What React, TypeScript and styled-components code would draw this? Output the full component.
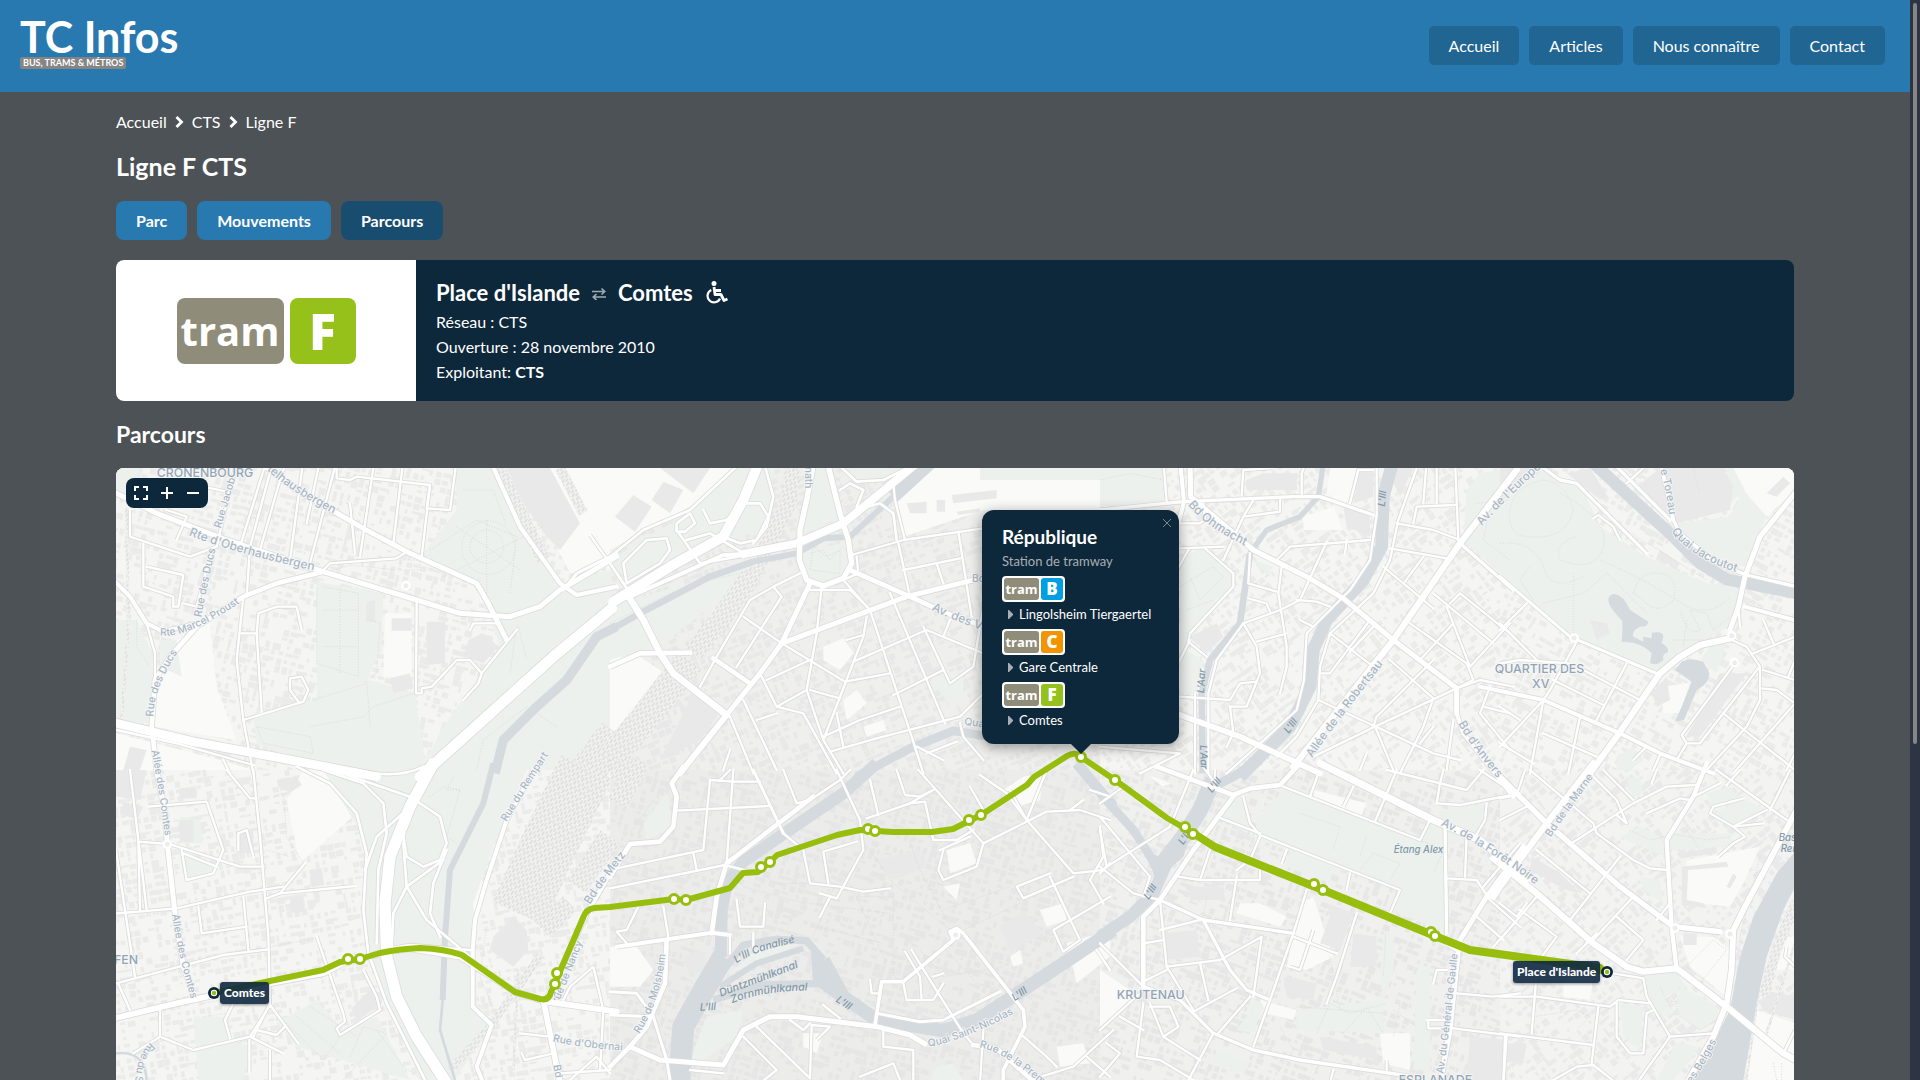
import React from "react";
import styled, { createGlobalStyle } from "styled-components";

const color = {
  brand: "#2979b1",
  brandDark: "#216593",
  active: "#194d70",
  page: "#4d5256",
  navy: "#0e283b",
  line: "#97be0d",
};

const GlobalStyle = createGlobalStyle`
  * { box-sizing: border-box; }
  body {
    margin: 0;
    background: ${color.page};
    color: #fff;
    font: 16px/25px Lato, "Noto Sans", sans-serif;
  }
  h1, h2, h3, p, ol, ul { margin: 0; padding: 0; }
  ol, ul { list-style: none; }
  a { color: inherit; text-decoration: none; }
`;

const Shell = styled.div`
  display: flex;
  height: 100vh;
`;
const Scroller = styled.div`
  flex: 1;
  min-width: 0;
  overflow-y: auto;
  scrollbar-width: none;
`;
const Rail = styled.div`
  width: 10px;
  padding: 3px;
  background: #2e3444;
`;
const Thumb = styled.div`
  width: 4px;
  height: 69%;
  border-radius: 2px;
  background: #868686;
`;

const Header = styled.header`
  display: flex;
  align-items: flex-start;
  justify-content: space-between;
  height: 92px;
  padding: 16px 25px 0 20px;
  background: ${color.brand};
`;
const Brand = styled.a`
  display: flex;
  flex-direction: column;
  align-items: flex-start;
`;
const BrandName = styled.span`
  font-size: 43px;
  font-weight: 700;
  line-height: 41px;
`;
const BrandTag = styled.span`
  padding: 0 3px;
  border-radius: 2px;
  background: #858585;
  font-size: 9px;
  font-weight: 700;
  line-height: 12px;
`;
const Nav = styled.nav`
  display: flex;
  gap: 10px;
  padding-top: 10px;
`;
const NavLink = styled.a`
  padding: 7px 20px;
  border-radius: 5px;
  background: ${color.brandDark};
`;

const Main = styled.main`
  display: flex;
  flex-direction: column;
  max-width: 1710px;
  margin: 0 auto;
  padding: 18px 16px 30px;
`;
const Crumbs = styled.ol`
  display: flex;
  align-items: center;
  line-height: 24px;
`;
const Crumb = styled.li`
  display: flex;
  align-items: center;
  svg { margin: 0 8px; }
`;
const PageTitle = styled.h1`
  margin: 16px 0 18px;
  font-size: 25px;
  line-height: 33px;
`;
const Tabs = styled.nav`
  display: flex;
  gap: 10px;
`;
const Tab = styled.a<{ $active?: boolean }>`
  padding: 7px 20px;
  border-radius: 8px;
  background: ${(p) => (p.$active ? color.active : color.brand)};
  font-weight: 700;
`;
const Card = styled.section`
  display: flex;
  margin: 20px 0;
  border-radius: 8px;
  overflow: hidden;
  background: ${color.navy};
`;
const LogoPane = styled.div`
  display: flex;
  align-items: center;
  justify-content: center;
  width: 300px;
  background: #fff;
`;
const Facts = styled.div`
  padding: 19px 20px 17px;
`;
const Route = styled.h2`
  display: flex;
  align-items: center;
  gap: 12px;
  margin-bottom: 3px;
  font-size: 22px;
  line-height: 27px;
`;
const SectionTitle = styled.h2`
  margin-bottom: 20px;
  font-size: 23px;
  line-height: 27px;
`;

const Badge = styled.span<{ $large?: boolean }>`
  display: inline-flex;
  gap: ${(p) => (p.$large ? 6 : 2)}px;
  padding: ${(p) => (p.$large ? 0 : 2)}px;
  border-radius: 4px;
  background: #fff;
  font-family: "Open Sans", "Noto Sans", sans-serif;
  font-weight: 700;
  text-align: center;
  line-height: ${(p) => (p.$large ? 66 : 22)}px;
`;
const BadgeWord = styled.span<{ $large?: boolean }>`
  width: ${(p) => (p.$large ? 107 : 35)}px;
  border-radius: ${(p) => (p.$large ? 8 : 3)}px;
  background: #8f8c79;
  font-size: ${(p) => (p.$large ? 40 : 13)}px;
`;
const BadgeLetter = styled.span<{ $large?: boolean; $tint: string }>`
  width: ${(p) => (p.$large ? 66 : 22)}px;
  border-radius: ${(p) => (p.$large ? 8 : 3)}px;
  background: ${(p) => p.$tint};
  font-size: ${(p) => (p.$large ? 50 : 17)}px;
  font-weight: 800;
`;

const MapFrame = styled.section`
  position: relative;
  height: 700px;
  border-radius: 8px;
  overflow: hidden;
  background: #f5f5f4;
`;
const Canvas = styled.svg`
  display: block;
  width: 100%;
  height: 100%;
`;
const Controls = styled.div`
  position: absolute;
  top: 10px;
  left: 10px;
  display: flex;
  border-radius: 8px;
  background: ${color.navy};
  padding: 0 2px;
`;
const ControlButton = styled.button`
  display: grid;
  place-items: center;
  width: 26px;
  height: 30px;
  padding: 0;
  border: 0;
  background: none;
  color: #fff;
`;
const Popup = styled.article<{ $x: number; $y: number }>`
  position: absolute;
  left: calc(50% + ${(p) => p.$x}px);
  top: ${(p) => p.$y}px;
  width: 197px;
  padding: 14px 20px 9px;
  border-radius: 12px;
  background: ${color.navy};
  box-shadow: 0 3px 14px rgba(0, 0, 0, 0.4);
  font-size: 13px;
  &::after {
    content: "";
    position: absolute;
    top: 100%;
    left: 50%;
    margin-left: -10px;
    border: 10px solid transparent;
    border-top-color: ${color.navy};
    border-bottom: 0;
  }
`;
const PopupTitle = styled.h3`
  font-size: 19px;
  line-height: 25px;
`;
const PopupKind = styled.p`
  padding-bottom: 2px;
  color: #a9aeb2;
`;
const CloseButton = styled.button`
  position: absolute;
  top: 6px;
  right: 5px;
  display: grid;
  place-items: center;
  width: 14px;
  height: 14px;
  padding: 0;
  border: 0;
  background: none;
  color: #7c868e;
`;
const Stop = styled.li`
  display: flex;
  flex-direction: column;
  align-items: flex-start;
`;
const Destination = styled.span`
  display: flex;
  align-items: center;
  gap: 6px;
  padding: 0 0 2px 6px;
  white-space: nowrap;
`;
const StopLabel = styled.span<{ $x: number; $y: number }>`
  position: absolute;
  left: calc(50% + ${(p) => p.$x}px);
  top: ${(p) => p.$y}px;
  padding: 0 4px;
  border-radius: 3px;
  background: rgba(14, 40, 64, 0.9);
  box-shadow: 0 1px 3px rgba(0, 0, 0, 0.4);
  font-size: 12px;
  font-weight: 900;
  line-height: 22px;
  white-space: nowrap;
`;

function TramBadge({ letter, tint, large }: { letter: string; tint: string; large?: boolean }) {
  return (
    <Badge $large={large}>
      <BadgeWord $large={large}>tram</BadgeWord>
      <BadgeLetter $large={large} $tint={tint}>{letter}</BadgeLetter>
    </Badge>
  );
}

/* ------------------------------------------------------------------ */
/* Base map. Each sheet is drawn in thirds of a pixel from its origin. */

type Stroke = [number, string];
type Label = [string, string, number?, string?];
interface Sheet {
  x: number; y: number; w: number; h: number;
  angle: number;
  land: string;
  block: string;
  green: string[];
  light: string[];
  dark: string[];
  water: Stroke[];
  lakes: string[];
  rail: Stroke[];
  roads: Stroke[];
  paths: string[];
  circles: [number, number][];
  labels: Label[];
}

const streetInk = "#a9b8c6";
const districtInk = "#93a5b5";
const waterInk = "#8199a8";

const minor = (...list: string[]): Stroke[] => list.map((d) => [7, d] as Stroke);

const sheets: Sheet[] = [
  {
    x: 110, y: 460, w: 1500, h: 930, angle: 14, land: "#f5f5f4", block: "#ebebea",
    green: [
      "M18 24H90L60 120 18 95Z",
      "M940 280 1040 150V24H1140L1350 370 1500 330V930H930L1000 800 1170 560 1110 380Z",
      "M620 365 820 400 815 560 770 660 620 730Z",
      "M430 780 780 660 915 700 950 930H640L440 850Z",
      "M18 480H80L135 600 120 790 18 780Z",
      "M150 540 200 540 215 650 150 620Z",
    ],
    light: [
      "M200 540 300 490 320 680 380 840 130 800 135 640Z",
      "M780 750 910 710V880L870 925 800 920Z",
      "M690 780 770 785 775 890 700 895Z",
      "M510 760 590 740 605 800 530 820Z",
      "M1220 24H1500V320L1380 340Z",
      "M825 460H905V650H820Z",
      "M18 820 330 900 430 930H18Z",
    ],
    dark: [
      "M1190 24H1320L1410 190 1350 270 1310 230 1240 130Z",
      "M950 485H1005V610L950 615Z", "M845 475H905V512H845Z", "M840 655 900 640 910 685 850 700Z",
      "M1075 540 1120 520 1165 560 1120 610 1060 590Z", "M60 860 110 870 90 930H40Z", "M770 425 795 420V485H768Z",
    ],
    water: [[28, "M1520 500 1460 530 1370 660 1280 740 1180 840 1155 940"]],
    lakes: [],
    rail: [[40, "M1165 24 1300 300"], [30, "M1350 24 1420 160"], [9, "M50 150 55 500 35 780"], [110, "M1420 950 1520 820"]],
    roads: [
      [26, "M0 785 250 845 500 892 800 950"], [32, "M930 950 1130 770 1330 590 1505 445"],
      [15, "M0 90 140 160 350 240 640 335 920 420 1050 460 1200 470 1290 440 1350 390 1520 290"],
      [15, "M440 0 560 90 760 205 900 280 1100 370 1135 430 1190 540"],
      [13, "M1140 0 1230 200 1350 370 1400 405 1520 380"],
      [14, "M640 335 500 370 400 410 260 500 180 590 135 660 125 800 140 930"],
      [12, "M0 350 60 410 110 490 160 515 260 490"], [9, "M1360 390 1400 340 1520 280"],
      ...minor(
        "M110 490 135 580 135 660", "M400 410 380 600 400 780 430 940", "M400 780 580 725 595 690 575 650 540 655 540 690 565 725",
        "M395 520H440L455 755", "M440 522 445 460 500 440 560 440 575 510", "M60 150V230L240 290 320 260 345 150 380 0",
        "M100 250V380L190 410V440H205L220 345 110 320", "M470 0 390 260", "M580 0 540 300", "M410 410 420 260 490 0",
        "M450 270 510 60 530 0", "M600 310 680 0 680 55 720 60 740 50 960 75 950 145 1020 150 1040 0", "M960 75 935 290",
        "M790 24 750 290", "M880 0 850 250", "M640 330 660 310 860 295 890 275",
        "M920 420 918 700H935V685L965 680 1040 600H1080L1115 640 1105 670 1060 720", "M1220 510 1115 640",
        "M20 810 200 850 430 915", "M220 430 260 440 300 290", "M630 0 590 190", "M1440 225 1500 310", "M170 150 230 170 200 240",
        "M280 80 350 95", "M340 900 360 940", "M720 130 735 280", "M1080 510 1090 490 1160 490",
      ),
    ],
    paths: [
      "M960 270 1100 180 1220 230 1200 400", "M1130 180V460", "M1040 200 1230 330", "M1215 260A80 80 0 1 1 1214 250",
      "M1180 260A50 50 0 1 1 1179 250", "M1000 350 1300 200", "M1060 90H1150L1190 200", "M640 380 745 400V650L620 610V380",
      "M690 380V640M640 450H745M640 560H745", "M780 480 810 490 800 640 770 660 780 800", "M600 800 760 770 790 740 910 700",
      "M610 720 770 670", "M1220 500 1200 640M1225 500 1250 600", "M640 340 720 315 860 330", "M870 300H930V330H870Z",
      "M1100 930 1120 840 1250 740 1340 800", "M80 480V560L120 620", "M440 800 600 830 610 880 460 850Z",
    ],
    circles: [[888, 377]],
    labels: [
      ["CRONENBOURG", "M140 52H600", 37, districtInk],
      ["telhausbergen", "M470 30Q560 110 720 185", 35],
      ["Rte d'Oberhausbergen", "M236 226Q400 290 700 350", 36],
      ["Rue Jacob", "M332 206 392 0", 31],
      ["Rue des Ducs", "M274 472Q290 380 325 230", 32],
      ["Rte Marcel Proust", "M150 526Q240 540 460 380", 31],
      ["Rue des Ducs", "M130 770Q130 680 220 550", 32],
      ["Allée des Comtes", "M124 872Q150 1000 172 1190", 31],
    ],
  },
  {
    x: 110, y: 770, w: 1500, h: 930, angle: -10, land: "#f5f5f4", block: "#ebebea",
    green: [
      "M640 0H1250L1160 200 1090 400 1100 700 1150 760 1020 950H940L830 700 770 500 760 200Z",
      "M500 760 620 690 700 780 800 740 900 930 560 830Z", "M250 740H360L350 800 420 830 400 930H265Z",
      "M210 140 270 150 280 220 215 220Z", "M225 250 320 290 300 320 230 330Z",
    ],
    light: ["M530 90 580 0H650L740 130 570 280Z", "M770 400 800 400V530H780Z", "M860 400 900 410 920 510 850 530Z", "M1085 320H1115V420H1090Z"],
    dark: [
      "M18 0H110L90 90 18 80Z", "M40 95 100 110 80 150 30 130Z", "M205 150H250V215H210Z", "M600 300 635 295 642 345 602 350Z",
      "M540 382 580 380 585 425 543 428Z", "M500 30 560 20 575 45 540 68 505 50Z", "M1150 500 1210 440 1250 480 1255 540 1210 590 1140 540Z",
      "M725 715 790 650 815 700 740 755Z", "M390 180H430V250H380Z", "M208 55H260V85H208Z",
    ],
    water: [[18, "M1150 -20 1120 100 1020 300 1005 500 998 690"], [8, "M998 690 990 780 1020 880 1035 930"], [8, "M18 850Q110 840 110 940"]],
    lakes: [],
    rail: [[170, "M1225 430 1310 240 1430 -10"], [70, "M1400 350 1500 200"], [60, "M1300 480 1380 400"], [24, "M1290 560 1140 770 1020 900"], [8, "M1225 600 1210 900"]],
    roads: [
      [34, "M970 -20 900 110 840 260 825 400 830 560 860 680 920 800 1010 940"],
      [17, "M0 748 200 700 290 680 480 640 640 610 700 580 830 545 900 535 1050 560 1215 665 1310 695 1520 725"],
      [15, "M140 0 165 130 172 220 195 430 220 590 250 670"],
      [12, "M1270 0 1190 150 1130 330 1095 450 1088 540V710L1145 765 1100 890 1120 940"],
      [17, "M1300 690 1350 940"], [14, "M1310 685 1430 430 1500 310 1520 290"],
      ...[
        "M560 -10 660 40 740 130 770 250 760 420 775 550 830 700 950 940", "M640 0 760 40 820 100 830 190 805 300 800 520",
        "M640 -10 900 80 990 140 1010 220 990 270 940 290 890 260 880 200 900 110", "M900 110 800 200 765 300",
        "M1000 270 890 350 850 430 845 530", "M880 220 890 350 950 450 1080 560", "M1010 240 970 340 960 430 990 500",
        "M740 0Q860 30 940 -10", "M1080 540 900 525 840 535",
      ].map((d) => [8, d] as Stroke),
      ...minor(
        "M430 0 450 200 475 500 480 700 430 800", "M350 0 420 85H440", "M0 432 200 415 420 365 520 350",
        "M115 110 290 95 340 240 310 310 230 330 215 240", "M172 220 390 290H460", "M90 420 85 215 172 222",
        "M18 240 75 620", "M18 640 340 555 475 538", "M265 410 275 490 410 470", "M400 380 415 540", "M470 385 510 370 735 348",
        "M510 370 585 280", "M620 500 700 730 705 755 680 775 690 795 810 720 800 680 760 600", "M150 710V800L70 850",
        "M150 800 250 840 420 800 480 705 565 820", "M440 780 500 795 525 770", "M418 810V905", "M480 840V940", "M370 700 345 750 360 805",
        "M1230 790 1320 800", "M1235 850 1245 870 1330 850", "M1360 690 1380 650 1450 590 1480 720 1470 900", "M1350 910 1500 900",
        "M220 250 320 290", "M385 240V190L410 180 430 260", "M24 640 60 720", "M1380 930 1460 860 1500 910", "M110 420 60 0", "M420 800 520 850",
      ),
    ],
    paths: [
      "M490 80 520 70 530 200 580 280M470 240 540 260", "M480 530 620 505", "M960 80 1000 50 1050 60 1010 200 1040 220",
      "M530 760 640 870M560 740 690 850M600 710 740 800M640 870 720 760", "M700 930 830 790 760 770 720 860", "M1030 20 1010 60 1050 60",
      "M280 740 350 730M330 690 280 700", "M20 330 100 400 110 420", "M1130 470 1110 620 1160 740", "M800 780 880 890 940 930",
    ],
    circles: [[172, 223]],
    labels: [
      ["Allée des Comtes", "M186 434Q205 570 268 770", 31],
      ["Rue du Rempart", "M1190 156Q1270 20 1410 -190", 31],
      ["Bd de Metz", "M1440 404Q1530 260 1680 110", 34],
      ["Rue de Nancy", "M1330 690 1350 690 1470 380", 31],
      ["FEN", "M12 582H200", 37, districtInk],
      ["Rue d'Obernai", "M1328 814Q1420 836 1580 844", 31],
      ["Bd de Lyon", "M1330 886 1370 1120", 31],
      ["Rue du S", "M122 818Q70 860 76 980", 31],
    ],
  },
  {
    x: 610, y: 460, w: 1500, h: 930, angle: -22, land: "#efefee", block: "#e8e8e8",
    green: [
      "M610 24H660L690 170 570 230 600 100Z", "M580 270 700 250 720 310 690 360 600 360 575 320Z",
      "M370 24H490L480 200 340 250 50 360 0 300 200 180Z", "M690 24H880L800 70 740 60Z", "M0 440 400 320 420 350 160 550 0 600Z",
      "M1110 60H1500V24H1110Z", "M520 740 570 730 580 660 600 700Z", "M960 650 1060 640 1060 720 1020 740Z",
    ],
    light: ["M0 24H370L240 140 0 270Z", "M880 24H1500V150H1120L880 230 860 150Z", "M100 500 300 380 310 400 190 500 120 520Z", "M640 560 700 535 730 580 690 630 640 600Z", "M760 800 820 780 830 810 770 830Z", "M0 590 90 590 180 650 100 760 0 820Z", "M700 720 740 690 770 730 710 780Z"],
    dark: ["M70 105 125 140 75 215 15 170Z", "M160 65 220 90 180 160 125 120Z", "M150 24H300L250 100Z", "M980 120H1005V155H980Z", "M1025 105 1160 90V115L1030 130Z", "M890 130 950 125V160H900Z", "M1040 155 1110 145V155L1045 165Z", "M250 680 340 740 270 840 150 900 230 740Z"],
    water: [[40, "M970 0 850 110"], [18, "M850 110 720 230 640 235 560 280 430 305"], [20, "M430 305 300 350 100 455 0 510"], [26, "M740 950 900 865 1030 812 1200 840 1500 800"]],
    lakes: [],
    rail: [[48, "M550 24 535 130 470 260 420 360"], [64, "M420 350 330 480 250 580"], [90, "M240 600 100 780 0 900"]],
    roads: [
      [30, "M10 425 180 320 340 230 400 120 450 0"], [24, "M400 282 560 250 700 190 920 10"], [12, "M60 410 340 285 410 282"],
      [16, "M612 0 590 120 570 210 568 300 590 360 640 378 700 355 725 310 715 240 690 160 650 0"],
      [20, "M50 400 100 480 150 580 190 640 350 765"], [18, "M350 765 210 940"], [15, "M350 765 450 640 515 550 600 370"],
      [15, "M515 550 890 410 1130 350"], [14, "M720 330 900 410 1010 460 1300 560"], [14, "M0 620 90 580 240 578"], [14, "M310 595 420 670"],
      ...[
        "M0 290 100 210 240 150 390 10", "M240 160 200 190 200 215 225 215 255 190Z", "M200 210 270 310 410 285",
        "M280 150 300 190 350 180 400 130 450 130 475 170 440 240 390 250 340 230", "M460 0 490 110 470 200 430 250",
        "M170 235 180 270 150 310 50 370 40 310 110 240Z", "M690 90 720 70 760 90 740 140", "M670 0 740 65 820 60 920 10",
        "M740 150 810 130 850 160 860 240", "M0 310 60 400", "M230 240 300 220 410 285",
      ].map((d) => [8, d] as Stroke),
      ...minor(
        "M850 70 855 120 885 240", "M725 285 880 240 1120 205", "M865 250 900 410", "M1045 215 1085 470", "M880 330 1050 295",
        "M980 310 1000 370", "M570 340 490 380 420 420 320 590 270 680", "M490 380 515 410 380 620", "M400 470 515 550 705 665",
        "M635 380 620 520 590 690 640 840 700 940", "M600 390 720 390 780 450", "M700 360 780 450 905 830 940 940",
        "M840 400 1005 790", "M770 470 760 530 640 840", "M450 640 500 740 590 690", "M470 660 600 600",
        "M400 720 500 930", "M500 740 580 760 680 940", "M600 690 690 715", "M360 770 430 940", "M660 875 800 835 1050 770 1120 700",
        "M640 830 750 780 870 740", "M705 665 840 640", "M850 705 1000 630", "M730 605 950 510 1120 580", "M680 760 700 860",
        "M1120 440 1090 620 1020 670 940 500", "M1050 790 1060 830 1120 900", "M360 870 340 930", "M1000 530 1020 480",
        "M710 540 760 525", "M440 780 500 760", "M740 290 745 340 700 360", "M920 860 1000 900M950 880 1040 845",
      ),
    ],
    paths: ["M600 280 640 270 660 300 700 260", "M600 330 690 340 690 270 650 290 610 260Z", "M660 24 720 110 700 140", "M0 490 180 400 300 360 430 330"],
    circles: [],
    labels: [
      ["nath", "M586 20V200", 31],
      ["Bd", "M1086 366H1200", 31],
      ["Av. des Vosges", "M964 450Q1080 505 1290 566", 36],
      ["Quai", "M1062 794 1200 814", 31],
    ],
  },
  {
    x: 610, y: 770, w: 1500, h: 930, angle: 16, land: "#ececeb", block: "#e6e6e6",
    green: ["M360 610 440 540 570 520 500 560Z", "M240 870 290 740 400 720 380 800 280 870Z", "M100 160 170 70 190 170 110 210Z", "M980 890 1030 880 1060 930H960Z"],
    light: ["M0 530 80 530 130 600 90 650 0 650Z", "M1010 240 1080 220 1100 280 1020 310Z", "M1200 560 1230 540 1240 580 1210 590Z", "M1340 830 1420 820 1440 880 1350 890Z", "M1290 420 1360 400 1370 450 1310 470Z", "M1180 60 1240 20 1300 10 1290 90 1220 110Z", "M1370 520 1500 480V560L1400 640Z", "M580 790H640L620 850 580 830Z", "M1000 350 1050 340 1040 390Z"],
    dark: ["M1170 470 1240 420 1300 490 1200 550Z", "M800 270 930 240 950 290 850 330Z", "M220 560 270 540 300 590 240 620Z"],
    water: [
      [36, "M800 -20 700 70 560 165 400 275 350 340 335 420 332 560"], [66, "M340 560 270 680 220 770 207 940"],
      [22, "M340 600 400 525 500 508 590 512 640 570"], [40, "M640 570 700 680 800 750 1000 782 1100 750 1300 620 1510 480"],
      [18, "M330 650 440 580 580 535"], [22, "M310 690 450 645 630 640 710 690"], [32, "M1400 -20 1510 110"],
    ],
    lakes: ["M600 520 700 660 720 720 610 640Z"],
    rail: [[60, "M0 0 80 0 20 100"]],
    roads: [
      [14, "M0 320 60 222 150 215 190 170 200 80 185 40 220 -10"], [14, "M610 80 350 280 320 380 305 490"], [12, "M20 530 305 488 360 495"],
      [14, "M170 510 165 640 110 770 60 830 0 890"], [15, "M60 830 150 870 340 885 400 780 480 740 560 740 800 770 900 795 945 822"],
      [11, "M795 765 815 635H880L1030 510 1020 485 1040 475 1060 490 1240 720 1245 770 1180 900V940"], [14, "M1090 825 1160 835 1260 925"],
      ...[
        "M0 665 80 670 130 740 170 870 180 930", "M0 735 125 740", "M800 730 930 755 1000 750 1170 665", "M520 190 430 0",
      ].map((d) => [9, d] as Stroke),
      ...minor(
        "M370 0 350 280", "M520 190 580 240 600 340 690 350 760 365 840 355", "M300 30 370 35 450 35", "M200 122 475 108", "M300 30 280 240 20 295",
        "M0 355 345 285 440 310", "M680 0 750 150 760 240 680 385 630 370", "M630 440 660 380", "M740 215 640 245 655 340", "M520 0 560 100 600 90 690 30 720 0",
        "M780 30 805 135", "M770 145 900 100 970 60 930 80 885 75 860 0", "M900 100 945 95 970 210H1040L1090 180",
        "M925 0 970 50 1120 220 1100 290 1000 330 985 300 1000 240", "M990 240 1080 200", "M1120 220 1310 125 1410 120 1500 150",
        "M1200 60 1250 150 1390 310 1480 300 1500 280", "M1390 320 1240 385 1220 350 1320 310", "M1320 320 1410 510 1360 545 1330 480 1500 380",
        "M905 540 935 590 1060 790 1090 825", "M885 545 930 620 935 690", "M880 640 890 690H970L1000 640", "M640 705 690 745", "M440 770 600 925 605 765 660 770 620 810",
        "M820 780V830L910 840V940", "M1120 780 1110 940", "M1235 795 1310 860 1340 890", "M1260 930 1390 890 1510 780", "M380 390 390 470 460 470 465 400",
        "M250 250 260 300", "M160 410 175 500", "M85 410 50 480 20 485 50 520", "M360 0 330 30", "M1470 170 1480 260 1440 330 1480 400",
        "M400 800 500 900 450 940", "M1440 60 1500 80M1380 120 1420 90", "M1080 50 1120 120", "M1110 15 1190 70 1250 150 1310 0", "M540 750 580 780 600 760", "M240 900 340 910",
        "M1460 540 1500 600", "M1430 860 1500 920", "M750 920 850 880 870 930", "M360 500V550M430 490V540", "M780 630 785 670 805 670", "M970 620 1000 610",
      ),
    ],
    paths: [
      "M750 200 850 340 1020 480", "M890 190 930 300 1020 470", "M470 320 500 340 600 340", "M690 310 600 520", "M720 340 830 580", "M600 400 840 430",
      "M620 470 820 520", "M740 380 850 380 850 620", "M1000 420 1200 350", "M1060 480 1230 400", "M180 250 150 330V420", "M130 90 60 190", "M400 350 580 400",
      "M930 540 1000 620 1180 590", "M220 620 350 710", "M1000 530 1100 640 1170 660",
    ],
    circles: [[1037, 495]],
    labels: [
      ["Rue de Molsheim", "M88 792Q160 680 170 510", 31],
      ["L'Ill Canalisé", "M380 580Q450 530 640 504", 31, waterInk],
      ["Düntzmühlkanal", "M332 680Q440 640 680 548", 32, waterInk],
      ["Zornmühlkanal", "M366 700Q480 652 680 664", 32, waterInk],
      ["L'Ill", "M270 722 400 716", 31, waterInk],
      ["L'Ill", "M676 694 760 750", 31, waterInk],
      ["L'Ill", "M1214 694 1290 640", 31, waterInk],
      ["Quai Saint-Nicolas", "M956 830Q1080 810 1290 686", 31],
      ["Rue de la Première", "M1108 832Q1200 850 1340 986", 31],
    ],
  },
  {
    x: 1100, y: 460, w: 1230, h: 930, angle: -35, land: "#f5f5f4", block: "#ebebea",
    green: ["M240 290 310 265 400 340 395 380 270 540 240 620Z", "M1090 240 1100 90 1140 40 1230 24V370Z", "M240 560 310 600 290 700 240 700Z", "M0 24H190V125L0 140Z", "M460 300 520 320 500 345Z"],
    light: ["M0 90 100 80V130L0 125Z", "M610 170 700 140 730 210 610 210Z", "M690 24H770L740 140 680 100Z"],
    dark: ["M780 24H820V110L760 130Z", "M730 140 810 165V230L740 200Z", "M880 24H940L900 110 880 70Z", "M270 530 350 490 370 530 320 580Z", "M490 40 590 40V90L440 90V60Z"],
    water: [[16, "M672 0 655 110 600 170 500 210 450 280"], [20, "M450 280 430 420 420 490 330 600 305 700 308 940"], [38, "M880 0 850 110 845 260 790 360 680 480 640 570 630 680 570 800 420 950"]],
    lakes: [],
    rail: [],
    roads: [
      [10, "M0 150 250 125 580 110 660 110 820 165"], [12, "M240 0 252 125 235 190"], [15, "M270 0 272 110 460 270 620 350 730 415 880 540 1070 685V760"],
      [19, "M1250 30 1080 250 880 540 580 920"], [17, "M0 680 240 765 420 830 660 940"], [10, "M1080 250 1240 390"], [12, "M1070 760 1090 820 1240 1010"],
      ...minor(
        "M425 105 430 30 520 24", "M605 110V40L620 0", "M950 24 895 180 870 300 820 400 690 520 660 620 655 720 590 830 530 890",
        "M830 0V165L810 300 750 390 620 520 612 660 590 750 470 860 380 940", "M890 190 1000 210 1080 240", "M940 190 950 140 1065 135", "M1065 0 1075 240",
        "M980 0 970 130M1010 24V130", "M870 265 1040 295", "M850 320 1000 445", "M915 365 970 290", "M1000 400 1180 550", "M930 490 1100 610 1120 660 1070 685",
        "M1040 440 1110 620 1230 490", "M1050 430 1080 400 1230 520", "M690 520 820 620", "M750 575 820 500", "M810 480 690 640 665 640", "M960 600 1060 490",
        "M870 600 1000 715", "M1070 685 825 800 640 890", "M1000 715 970 800 900 940", "M820 800 830 770 1000 600", "M1070 685 1140 660 1240 680",
        "M825 800 880 930", "M655 720 1000 880 1080 900", "M1170 680 1140 760 1230 870", "M530 300 570 260 810 240", "M450 280 445 370 530 395M445 415 500 430 510 455",
        "M545 320 535 400 560 560 560 620 540 700", "M680 245 600 420 540 450 430 490", "M460 120 430 170 540 155V120", "M430 170 370 300", "M590 420 650 425 690 440",
        "M600 480 640 500", "M430 490 470 560 480 640 440 740H390", "M430 490 350 600 325 700V940", "M470 545 560 520", "M240 710 390 720 420 670 470 665", "M390 740 400 820 380 860",
        "M240 265 370 260", "M315 265 400 340V380L270 520 265 545 320 590", "M190 0 200 125", "M750 130 775 30 820 30", "M0 860 240 880 120 940", "M285 700V940", "M265 270 180 420",
        "M240 600 270 540", "M310 130 315 180 300 190H240", "M740 240 735 280", "M1000 800 960 850", "M1060 780 1040 930", "M1150 740 1230 760", "M800 880 780 930",
      ),
    ],
    paths: ["M240 380 340 320 370 350 300 420 270 350", "M0 60 90 40 190 60", "M870 60 860 250", "M1130 130 1230 120M1180 90 1150 240 1230 300", "M260 450 340 420"],
    circles: [],
    labels: [
      ["Bd Ohmacht", "M264 134Q320 210 500 288", 36],
      ["L'Ill", "M854 140 864 40", 30, waterInk],
      ["L'Aar", "M312 700 320 560", 30, waterInk],
      ["L'Aar", "M300 856 306 1000", 30, waterInk],
      ["L'Ill", "M566 822 640 720", 30, waterInk],
      ["Allée de la Robertsau", "M636 894Q720 770 940 500", 35],
      ["Av. de l'Europe", "M1146 198Q1220 110 1420 -60", 35],
      ["Bd d'Anvers", "M1074 792Q1130 890 1300 1080", 35],
      ["QUARTIER DES", "M1184 640H1700", 37, districtInk],
      ["XV", "M1296 684H1500", 37, districtInk],
    ],
  },
  {
    x: 1500, y: 460, w: 885, h: 930, angle: 28, land: "#f5f5f4", block: "#ebebea",
    green: ["M0 130 130 30 250 90 300 200 440 290 620 370 740 380 690 500 530 580 480 640 230 540 0 340Z", "M520 190 690 170 730 90 800 170 740 320 640 300 540 210Z", "M680 24H700L735 90 690 130Z", "M630 560 680 550 650 640 600 600Z", "M350 890 400 860 430 900 390 930H350Z"],
    light: ["M700 24H885V90L800 170 730 90Z", "M330 230 430 280 400 330 330 290Z", "M130 430 160 395 190 430 180 470Z", "M455 425 490 400 512 410 500 440Z", "M480 680 570 670 540 760 490 760Z"],
    dark: ["M400 90 480 24H670L700 80 690 150 530 190Z", "M200 40 270 24 330 120 290 110Z", "M270 480 320 490 330 520 290 540Z", "M455 700 500 650 510 720 470 740Z", "M660 640 740 640 600 830 560 830Z", "M480 270 540 310 530 330 470 290Z", "M800 100 850 50 870 70 830 110Z", "M0 24H100L0 130Z"],
    water: [[36, "M270 0 400 120 520 230 600 310 680 358 900 402"]],
    lakes: [
      "M325 420Q325 402 345 402 370 405 390 450L445 485Q445 500 420 500 395 510 400 530L430 545 430 530 455 535 455 518Q490 512 490 530L485 550Q505 560 505 575 485 580 490 600 470 620 450 608L455 580Q440 560 400 548L365 545Q370 490 365 480 325 440 325 420Z",
      "M525 630 545 605Q570 590 610 605L628 640Q630 670 590 690L552 780 525 785 545 740 575 665Z",
    ],
    rail: [],
    roads: [
      [10, "M130 24 180 60 230 70 440 280"], [10, "M330 0 510 180"], [15, "M900 80 780 230 735 350 715 440 690 510"], [10, "M520 180 540 220 650 310 740 345 900 382"],
      [12, "M735 440 900 485"], [19, "M690 535 600 555 540 590 480 640 350 830 270 940"], [9, "M0 350 210 530 480 645"], [11, "M480 0 520 180"], [12, "M-60 680 130 720 360 820 480 880 640 940"],
      ...minor(
        "M380 70 430 24", "M695 540 740 560 780 620V720L740 800 610 940", "M885 530 760 580", "M790 480 820 550", "M790 630 885 660", "M785 685 830 690 885 730",
        "M775 625 600 850H560L545 825 705 610", "M560 850 530 900", "M670 760 885 930", "M885 730 700 940", "M230 545 150 690 130 720 90 940", "M380 610 290 780",
        "M250 630 420 720", "M0 490 110 600", "M0 510 80 430", "M160 660 310 735", "M130 820 290 890", "M240 770 205 940", "M0 860 130 720", "M0 850 100 910",
        "M0 610 60 600 210 610", "M0 740 60 780", "M400 900 440 860M480 885 460 930", "M885 600 865 650M885 880 860 930", "M280 175 295 165 340 200 360 240", "M715 440 720 500",
      ),
    ],
    paths: [
      "M130 60Q40 80 30 150 20 230 90 230 200 240 220 150 200 70 130 60", "M0 250Q100 240 130 320 150 400 250 350", "M180 100Q330 180 310 260 290 340 180 300 160 250 230 230",
      "M220 340V520", "M90 320 60 360 100 420", "M300 300Q440 360 560 440 640 470 690 410", "M400 400Q420 330 480 340 540 350 520 420 470 470 430 420Z", "M540 450Q560 530 600 510L570 450 620 460 640 510 690 470",
      "M130 430 250 400 320 340 440 460", "M560 480 550 560", "M520 540 640 540", "M580 24 600 100", "M330 180 620 360",
    ],
    circles: [[695, 527], [704, 608], [222, 534]],
    labels: [
      ["e Toreau", "M480 30Q500 90 516 230", 33],
      ["Quai Jacoutot", "M514 214Q590 320 820 364", 35],
    ],
  },
  {
    x: 1100, y: 770, w: 1260, h: 930, angle: 20, land: "#f0f0ef", block: "#e7e7e7",
    green: ["M350 140 390 90 430 90 460 170 440 190Z", "M560 60 640 90 960 200 1030 120 1160 100 1120 210 1040 220V490L880 420 900 360 460 200 480 130Z", "M570 230 700 290 690 340 560 290Z", "M590 720 850 690V790L590 780Z", "M850 490 880 500V600L850 700 840 620Z", "M410 780 470 700 490 700 460 790Z", "M950 600H990V900H940Z", "M350 840 450 880 430 910 340 880Z"],
    light: ["M420 400 480 400 560 440 540 470 410 430Z", "M0 600 120 680 0 770Z", "M640 60 800 100 780 150 650 130Z", "M600 400 640 380 700 560 620 600 560 590Z", "M240 510 280 500 290 550 240 560Z", "M480 690 590 720 580 750 500 730Z", "M840 790H930V900L850 880Z", "M160 20 210 40 190 50 150 20Z"],
    dark: ["M680 400 760 430 720 540 660 520 690 440Z", "M270 350 370 350 375 390 270 390Z", "M760 490 830 500 830 590 750 590Z", "M550 620 650 640 640 690 560 680Z", "M1110 800 1220 810V930H1100Z", "M660 800 830 830V870L670 840Z", "M190 490 290 480 300 560 200 570Z"],
    water: [[28, "M480 -30 400 20 340 50"], [48, "M340 30 300 120 250 200 180 290"], [26, "M0 70 100 180 170 290"], [36, "M200 280 160 370 90 440 0 500"]],
    lakes: ["M130 240 180 260 280 170 250 260 170 330Z"],
    rail: [],
    roads: [
      [14, "M170 -10 400 75 450 55 540 45 600 -20"], [21, "M660 -20 1000 150 1140 210 1260 310 1280 325"], [14, "M400 80 280 240 180 390 130 440V650"], [15, "M1270 230 1160 380 1080 510"],
      [15, "M1040 520 1075 540 1050 780 1020 940"], [10, "M1035 160 1040 490"], [10, "M180 390 310 450 580 490"], [10, "M310 450 390 600 440 660 510 690"], [10, "M130 650 240 690 340 790 460 840 600 870 940 920"],
      ...minor(
        "M430 80 450 160 480 195 900 360 870 430", "M550 50 960 210 990 150", "M655 10 630 80", "M760 50 730 110", "M890 0 825 155", "M480 190 350 140", "M0 100 70 50",
        "M20 290 210 170 280 0", "M0 140 150 320 130 380", "M0 290 100 370 180 390", "M620 360 580 490 510 690 460 830", "M235 320 300 330H480V300", "M330 240 300 330",
        "M410 320 390 450", "M480 200 450 270 410 300", "M560 240 545 280", "M750 310 740 360", "M180 390 200 590 280 720", "M130 520 190 510", "M180 480 300 450",
        "M200 590 360 570 485 500 460 680", "M300 580 325 690", "M280 725 410 655", "M130 635 200 600", "M0 780 130 660", "M150 700 190 800 300 870", "M130 700 110 860 180 870 280 930",
        "M350 795 450 680", "M340 790 260 940", "M60 740 130 780", "M0 520 130 650", "M770 430 710 620 680 700", "M580 500 710 550", "M1070 670 1180 680 1260 670", "M1060 775 1260 800",
        "M1040 325 1130 330 1170 390 1260 470", "M1100 200 1095 320", "M1130 440 1210 510", "M1180 530 1260 440", "M1160 100 1155 150 1120 210", "M1010 100 1080 105 1260 70",
        "M1030 0 1020 40 1010 100", "M860 0 1100 60 1150 0", "M1150 350 1260 220", "M1220 800 1210 940", "M980 750H1040M985 750V775L1060 775", "M150 710 210 710 235 770 190 800", "M0 180 20 290 0 310",
        "M640 480 600 600 570 590", "M700 900 690 940M860 870V900", "M20 820 60 850 0 920", "M1000 640 1010 600 1040 600", "M1140 0 1260 80", "M345 0V40L310 -10",
      ),
    ],
    paths: ["M590 710 850 730M650 790 690 700 750 730 860 700", "M730 790 800 710 850 790", "M780 300 820 250 900 280 870 330", "M860 440 850 620", "M800 200 780 260", "M960 210 1030 240 1000 310", "M540 770 580 840 540 900", "M600 130 720 170 700 240", "M690 560 720 720M320 380 310 440", "M880 720 950 770M900 700 880 800"],
    circles: [],
    labels: [
      ["L'Ill", "M250 226 300 150", 30, waterInk],
      ["L'Ill", "M336 70 400 -10", 30, waterInk],
      ["L'Ill", "M146 390 210 290", 30, waterInk],
      ["Étang Alex", "M881 250H1200", 29, waterInk],
      ["Av. de la Forêt Noire", "M1022 166Q1220 260 1500 500", 35],
      ["KRUTENAU", "M50 686H400", 37, districtInk],
      ["ESPLANADE", "M896 942H1400", 37, districtInk],
      ["Av. du Général de Gaulle", "M1030 912Q1052 760 1082 460", 31],
    ],
  },
  {
    x: 1500, y: 770, w: 885, h: 930, angle: -38, land: "#f3f3f2", block: "#eaeaea",
    green: ["M360 200 420 170 500 210 495 260Z", "M510 190H700L690 230 510 240Z", "M640 130 730 85 800 120 700 165Z", "M430 620 520 600 560 650 490 680 520 720 490 740 450 700Z", "M360 700 430 710 420 840 370 800Z", "M530 820 600 830 520 930H470Z", "M540 650 640 700 660 740 600 780 530 730Z", "M420 320 480 330 490 400 430 360Z", "M620 70 690 50 720 90 640 120Z", "M380 30 420 20 430 70 400 80Z"],
    light: ["M560 270 780 230 730 340 690 410 600 400 560 400Z", "M770 720 885 760V930H740Z", "M820 600 885 600V500H860Z", "M540 500 640 500 690 540 680 680 570 590Z", "M190 610 280 620 270 690 190 680Z"],
    dark: ["M545 290 680 275 685 290 565 300 560 390 610 400V412L545 405Z", "M680 350 700 310 710 320 690 355Z", "M790 660 885 680V750L785 720Z", "M550 490H590V525H550Z", "M530 250 650 230V250L540 265Z", "M0 820 80 820 70 880 0 870Z", "M95 260 180 310 240 370 200 360 90 300Z"],
    water: [],
    lakes: ["M885 245 830 310 760 440 720 560 690 720 640 820 560 930H730L770 700 800 560 850 420 885 350Z"],
    rail: [[30, "M885 400 830 540 790 680"], [8, "M885 520 800 790"], [6, "M780 640 740 930"]],
    roads: [
      [16, "M-10 10 140 160 360 350 520 470 660 485"], [19, "M-20 265 110 370 280 520 380 590 430 605 530 595 680 710 850 850 890 872"], [17, "M895 110 740 400 700 480 695 600 680 700 640 800 560 940"],
      [13, "M620 -20 580 80 500 210 505 300 515 470 530 600"], [19, "M280 -20 140 160 0 350 -20 380"],
      ...minor(
        "M585 45 500 50 400 100 215 220", "M470 0 455 40", "M310 0 400 90", "M270 10 350 90 380 160 350 135", "M75 0 50 75 0 85", "M90 0 280 160 290 190 400 270 450 295 500 300",
        "M110 240 270 370", "M210 450 360 260", "M270 520 400 380", "M350 440 430 510 380 570", "M60 420 170 500 110 580", "M0 510 110 380", "M470 450 510 400", "M650 0 860 150",
        "M590 75 660 40M680 45 720 0", "M800 120 700 170 630 130 640 110 730 85", "M870 0 810 120", "M700 170 790 160M700 170 735 200 700 220 655 260", "M440 130 540 85 570 90", "M0 680 110 680 330 710 355 690 450 700",
        "M110 610 95 790", "M295 710 275 880", "M0 790 280 825", "M350 700V800L390 850H430L440 730 460 720", "M340 610 430 625 440 680 510 800 640 790", "M510 800 410 940",
        "M160 930 230 890 280 885 350 940", "M15 795 10 940", "M230 550 290 490", "M0 400 50 440 80 400", "M0 150 80 110", "M320 310 240 240", "M885 590 855 560 860 530", "M885 780 850 850",
      ),
    ],
    paths: ["M570 580 640 510 680 540 600 640M560 590 640 650", "M390 180 450 210 500 200M510 190 620 210 690 200M560 180 600 240", "M820 880 830 930M845 880V930", "M780 260 720 500 710 620", "M540 650 520 690 540 740 600 780 650 750", "M480 650 510 710", "M100 740 230 720 270 740 240 770", "M680 790 720 900"],
    circles: [[525, 474], [690, 492]],
    labels: [
      ["Bd de la Marne", "M152 202Q220 100 340 -60", 31],
      ["Bassin", "M836 213H1000", 29, waterInk],
      ["Rempart", "M842 246H1000", 29, waterInk],
      ["Quai des Belges", "M516 1020Q620 900 700 700", 32],
    ],
  },
];

/* Scatters small building footprints over a sheet, always in the same way. */
function buildings(sheet: Sheet, step: number): string {
  const a = (sheet.angle * Math.PI) / 180;
  const cos = Math.cos(a);
  const sin = Math.sin(a);
  let seed = sheet.x * 7 + sheet.y;
  const rnd = () => {
    seed = (seed * 1103515245 + 12345) % 2147483648;
    return seed / 2147483648;
  };
  const out: string[] = [];
  const span = 1200;
  const cx = sheet.w / 2;
  const cy = sheet.h / 2;
  for (let v = -span; v < span; v += step) {
    for (let u = -span; u < span; u += step) {
      const keep = rnd();
      const w = 7 + rnd() * 17;
      const h = 7 + rnd() * 15;
      const px = cx + u * cos - v * sin;
      const py = cy + u * sin + v * cos;
      if (keep < 0.3 || px < 0 || py < 0 || px > sheet.w || py > sheet.h) continue;
      out.push(
        `M${px.toFixed(0)} ${py.toFixed(0)}l${(w * cos).toFixed(0)} ${(w * sin).toFixed(0)} ${(-h * sin).toFixed(0)} ${(h * cos).toFixed(0)} ${(-w * cos).toFixed(0)} ${(-w * sin).toFixed(0)}z`,
      );
    }
  }
  return out.join("");
}

function Layer({ draw }: { draw: (s: Sheet, i: number) => React.ReactNode }) {
  return (
    <>
      {sheets.map((s, i) => (
        <g key={i} transform={`translate(${s.x} ${s.y}) scale(${1 / 3})`}>{draw(s, i)}</g>
      ))}
    </>
  );
}

const fills = (list: string[], fill: string) => list.map((d, i) => <path key={fill + i} d={d} fill={fill} />);
const strokes = (list: Stroke[], stroke: string, extra = 0) =>
  list.map(([w, d], i) => <path key={stroke + i} d={d} stroke={stroke} strokeWidth={w + extra} />);

const stops: [number, number][] = [
  [348, 959], [360, 959], [557, 973], [555, 984], [674, 899], [686, 900], [761, 867], [770, 862],
  [868, 829], [875, 831], [969, 820], [981, 815], [1081, 757], [1115, 780], [1185, 827], [1193, 834],
  [1314, 884], [1323, 890], [1431, 932], [1435, 936],
];
const termini: [number, number][] = [[214, 993], [1607, 972]];

function BaseMap() {
  return (
    <Canvas viewBox="115 468 1680 700" preserveAspectRatio="xMidYMin slice" role="img" aria-label="Plan de la ligne F">
      <defs>
        <pattern id="tracks" width="20" height="16" patternUnits="userSpaceOnUse" patternTransform="rotate(-58)">
          <rect width="20" height="16" fill="#f1f1f0" />
          <rect width="13" height="5" fill="#dedede" />
          <rect x="9" y="8" width="11" height="5" fill="#e0e0e0" />
        </pattern>
      </defs>
      <Layer draw={(s) => (
        <>
          <rect width={s.w} height={s.h} fill={s.land} />
          <path d={buildings(s, 22)} fill={s.block} />
        </>
      )} />
      <Layer draw={(s) => (
        <>
          {fills(s.light, "#fafaf8")}
          {fills(s.green, "#ecf1ee")}
          {fills(s.dark, "#e9e9e9")}
        </>
      )} />
      <g fill="none" strokeLinejoin="round">
        <Layer draw={(s) => (
          <>
            {strokes(s.rail, "url(#tracks)")}
            <g strokeDasharray="3 5">{s.paths.map((d, i) => <path key={i} d={d} stroke="#dadcda" strokeWidth="3" />)}</g>
            {strokes(s.water, "#d4dadd")}
            {fills(s.lakes, "#d4dadd")}
          </>
        )} />
        <Layer draw={(s) => <>{strokes(s.roads, "#dcdcdc", 5)}</>} />
        <Layer draw={(s) => (
          <g strokeLinecap="round">
            {strokes(s.roads, "#ffffff")}
            {s.circles.map(([x, y]) => <circle key={x} cx={x} cy={y} r="11" fill="#ededed" stroke="#fff" strokeWidth="7" />)}
          </g>
        )} />
      </g>
      <Layer draw={(s, n) => (
        <g fontFamily='Inter, "Noto Sans", sans-serif' fontWeight="500" stroke="#f7f7f6" strokeWidth="5" strokeLinejoin="round" paintOrder="stroke">
          <defs>
            {s.labels.map(([, d], i) => <path key={i} id={`way-${n}-${i}`} d={d} />)}
          </defs>
          {s.labels.map(([text, , size = 31, tint = streetInk], i) => (
            <text key={i} fontSize={size} fill={tint}
              fontStyle={tint === waterInk ? "italic" : undefined}
              stroke={tint === waterInk ? "none" : undefined}>
              <textPath href={`#way-${n}-${i}`}>{text}</textPath>
            </text>
          ))}
        </g>
      )} />
      <g fill="none" stroke={color.line} strokeLinejoin="round" strokeLinecap="round">
        <path strokeWidth="6" d="M214 993 270 981 323 970 340 962 360 959 380 953Q398 949 420 948 445 949 462 955L515 992 540 999Q549 1001 551 992L555 983 583 918Q586 909 594 908L610 907 674 899 686 900 730 888 743 873 758 872 770 862 777 855 837 835 860 830 893 832 932 832 953 829 981 815 1027 785 1034 777 1067 756Q1075 751 1081 757L1115 780 1167 818 1193 833" />
        <path strokeWidth="8" d="M1193 833 1215 847 1323 890 1435 936 1470 950 1520 957 1600 968" />
        <path strokeWidth="6" d="M1598 970 1607 972" />
      </g>
      {stops.map(([x, y]) => <circle key={`${x}-${y}`} cx={x} cy={y} r="4.5" fill="#fff" stroke={color.line} strokeWidth="3" />)}
      {termini.map(([x, y]) => (
        <g key={x}>
          <circle cx={x} cy={y} r="6" fill={color.navy} />
          <circle cx={x} cy={y} r="3.2" fill="#fff" />
          <circle cx={x} cy={y} r="2.2" fill={color.line} />
        </g>
      ))}
    </Canvas>
  );
}

const Chevron = () => (
  <svg width="9" height="12" viewBox="0 0 9 12" fill="none" stroke="#fff" strokeWidth="2.8" aria-hidden="true">
    <path d="M1.500 1 6.500 6 1.500 11" />
  </svg>
);

const calls = [
  { letter: "B", tint: "#009ee3", to: "Lingolsheim Tiergaertel" },
  { letter: "C", tint: "#f29400", to: "Gare Centrale" },
  { letter: "F", tint: "#95c11f", to: "Comtes" },
];

export default function App() {
  return (
    <Shell>
      <GlobalStyle />
      <Scroller>
        <Header>
          <Brand href="#">
            <BrandName>TC Infos</BrandName>
            <BrandTag>BUS, TRAMS &amp; MÉTROS</BrandTag>
          </Brand>
          <Nav>
            {["Accueil", "Articles", "Nous connaître", "Contact"].map((t) => <NavLink key={t} href="#">{t}</NavLink>)}
          </Nav>
        </Header>
        <Main>
          <Crumbs>
            <Crumb><a href="#">Accueil</a><Chevron /></Crumb>
            <Crumb><a href="#">CTS</a><Chevron /></Crumb>
            <Crumb>Ligne F</Crumb>
          </Crumbs>
          <PageTitle>Ligne F CTS</PageTitle>
          <Tabs>
            <Tab href="#">Parc</Tab>
            <Tab href="#">Mouvements</Tab>
            <Tab href="#" $active>Parcours</Tab>
          </Tabs>
          <Card>
            <LogoPane><TramBadge letter="F" tint="#95c11a" large /></LogoPane>
            <Facts>
              <Route>
                Place d'Islande
                <svg width="14" height="15" viewBox="0 0 14 15" fill="none" stroke="#9fa9b1" strokeWidth="1.7" aria-hidden="true">
                  <path d="M0 6.500H12.500M9.500 3.500 12.700 6.500 9.500 9.500M14 12H1.500M4.500 9 1.300 12 4.500 15" />
                </svg>
                Comtes
                <svg width="23" height="23" viewBox="0 0 23 23" fill="none" stroke="#fff" strokeWidth="2.8" strokeLinejoin="round" aria-label="Accessible">
                  <circle cx="9" cy="2.600" r="2.500" fill="#fff" stroke="none" />
                  <path d="M9 6 10 13.500H16L19 19.500 22.500 18" />
                  <path d="M9.500 9.500H16" />
                  <path d="M6.300 9A6.500 6.500 0 1 0 15 17.500" strokeWidth="2.200" />
                </svg>
              </Route>
              <p>Réseau : CTS</p>
              <p>Ouverture : 28 novembre 2010</p>
              <p>Exploitant: <b>CTS</b></p>
            </Facts>
          </Card>
          <SectionTitle>Parcours</SectionTitle>
          <MapFrame>
            <BaseMap />
            <StopLabel $x={-735} $y={514}>Comtes</StopLabel>
            <StopLabel $x={558} $y={493}>Place d'Islande</StopLabel>
            <Controls>
              <ControlButton aria-label="Plein écran">
                <svg width="14" height="14" viewBox="0 0 14 14" fill="none" stroke="currentColor" strokeWidth="2">
                  <path d="M1 5V1H5M9 1H13V5M13 9V13H9M5 13H1V9" />
                </svg>
              </ControlButton>
              <ControlButton aria-label="Zoom avant">
                <svg width="14" height="14" viewBox="0 0 14 14" stroke="currentColor" strokeWidth="2"><path d="M7 1V13M1 7H13" /></svg>
              </ControlButton>
              <ControlButton aria-label="Zoom arrière">
                <svg width="14" height="14" viewBox="0 0 14 14" stroke="currentColor" strokeWidth="2"><path d="M1 7H13" /></svg>
              </ControlButton>
            </Controls>
            <Popup $x={27} $y={42}>
              <CloseButton aria-label="Fermer">
                <svg width="8" height="8" viewBox="0 0 8 8" stroke="currentColor"><path d="M0 0 8 8M8 0 0 8" /></svg>
              </CloseButton>
              <PopupTitle>République</PopupTitle>
              <PopupKind>Station de tramway</PopupKind>
              <ul>
                {calls.map((c) => (
                  <Stop key={c.letter}>
                    <TramBadge letter={c.letter} tint={c.tint} />
                    <Destination>
                      <svg width="5" height="9" viewBox="0 0 5 9" fill="#a9aeb2" aria-hidden="true"><path d="M0 0H1L5 4V5L1 9H0Z" /></svg>
                      {c.to}
                    </Destination>
                  </Stop>
                ))}
              </ul>
            </Popup>
          </MapFrame>
        </Main>
      </Scroller>
      <Rail><Thumb /></Rail>
    </Shell>
  );
}
